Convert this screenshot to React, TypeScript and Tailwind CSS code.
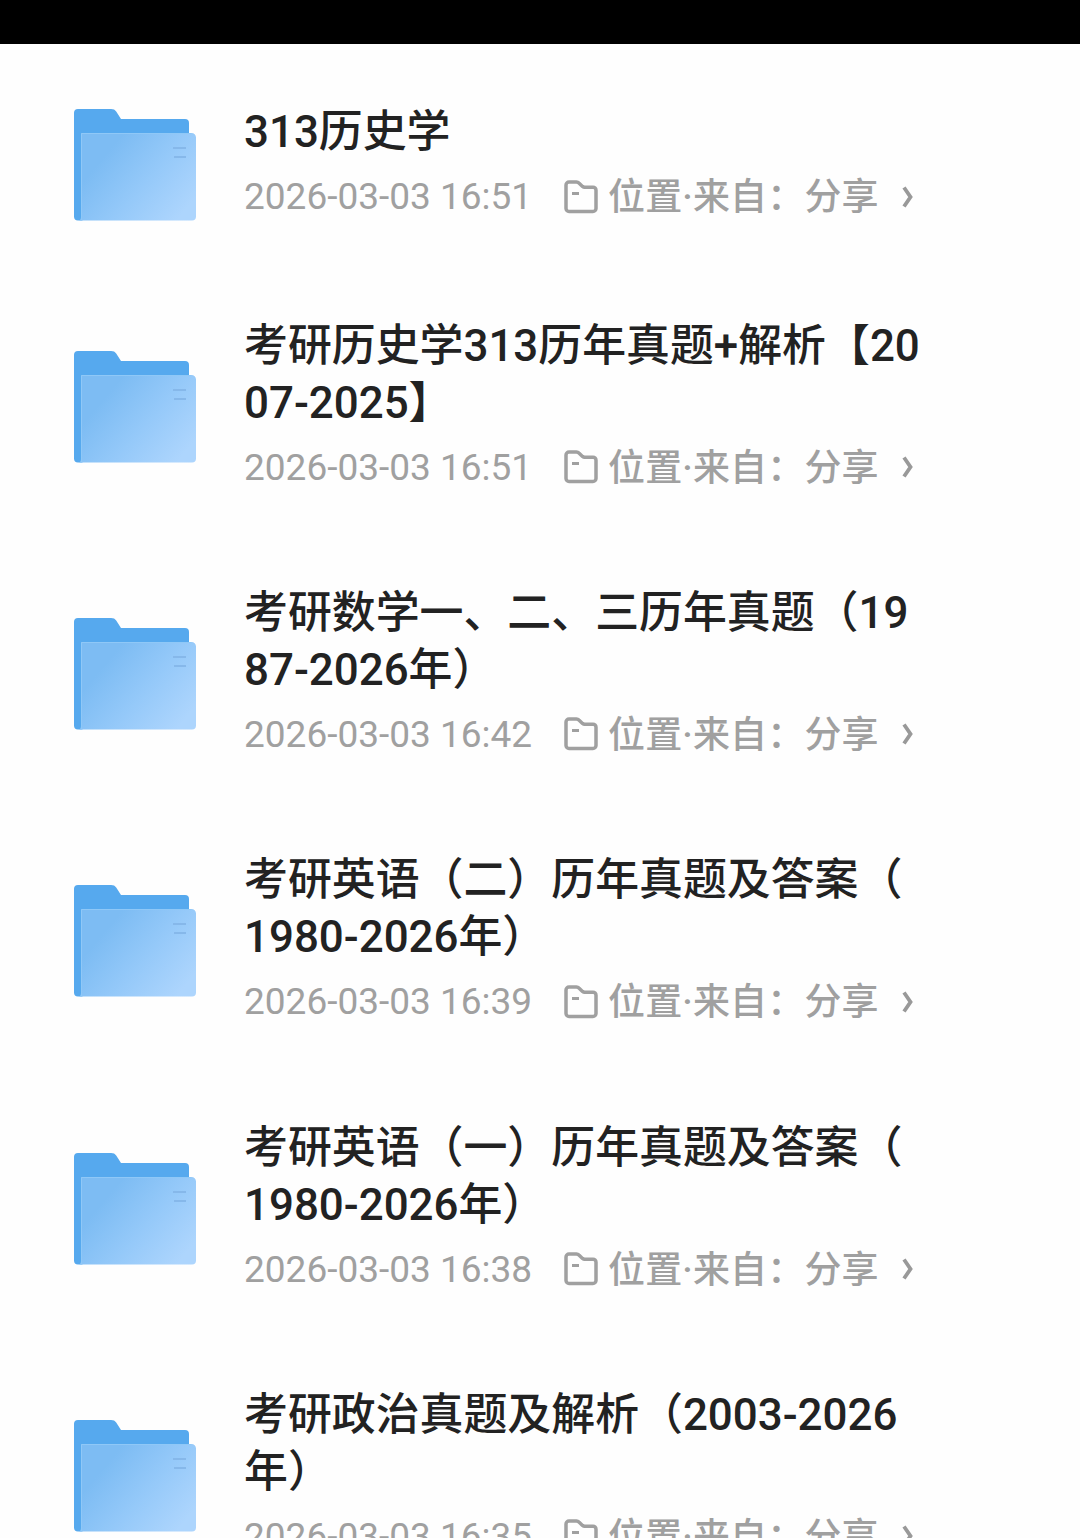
type FolderItem = {
  title: string[];
  time: string;
};

const folders: FolderItem[] = [
  { title: ["313历史学"], time: "2026-03-03 16:51" },
  { title: ["考研历史学313历年真题+解析【20", "07-2025】"], time: "2026-03-03 16:51" },
  { title: ["考研数学一、二、三历年真题（19", "87-2026年）"], time: "2026-03-03 16:42" },
  { title: ["考研英语（二）历年真题及答案（", "1980-2026年）"], time: "2026-03-03 16:39" },
  { title: ["考研英语（一）历年真题及答案（", "1980-2026年）"], time: "2026-03-03 16:38" },
  { title: ["考研政治真题及解析（2003-2026", "年）"], time: "2026-03-03 16:35" },
];

function FolderIcon({ id }: { id: string }) {
  return (
    <svg className="h-[114px] w-[124px] shrink-0" viewBox="0 0 124 114" fill="none">
      <defs>
        <linearGradient id={`${id}-front`} x1="30" y1="50" x2="104" y2="112" gradientUnits="userSpaceOnUse">
          <stop offset="0" stopColor="#7dbcf3" />
          <stop offset="0.5" stopColor="#95c9f9" />
          <stop offset="1" stopColor="#add5fd" />
        </linearGradient>
      </defs>
      <path
        d="M1 5a4 4 0 0 1 4-4h33c2.500 0 4 .8 5.200 2.600L48 11h64a4 4 0 0 1 4 4v40L9 112.500H5a4 4 0 0 1-4-4V5Z"
        fill="#56a9ee"
      />
      <path d="M8 25h110.500a4.500 4.500 0 0 1 4.500 4.500V108.500a4 4 0 0 1-4 4H6c1.500-.5 2-2 2-4V25Z" fill={`url(#${id}-front)`} />
      <path d="M8.500 112V25.500H118" stroke="#8fc8f7" strokeWidth="1" />
      <path d="M100 40h13M101 49h12" stroke="#86b8ea" strokeWidth="2" />
    </svg>
  );
}

function LocationIcon() {
  return (
    <svg className="ml-[35px] h-[34px] w-[34px] shrink-0" viewBox="0 0 34 34" fill="none" stroke="#a0a0a0">
      <path
        d="M2 5a3 3 0 0 1 3-3h7.500c1 0 1.700.3 2.400 1l3.600 3.400c.7.6 1.300.8 2.200.8H29a3 3 0 0 1 3 3V28.500a3 3 0 0 1-3 3H5a3 3 0 0 1-3-3V5Z"
        strokeWidth="3.500"
        strokeLinejoin="round"
      />
      <path d="M8 13.500h7" strokeWidth="3" />
    </svg>
  );
}

function FolderRow({ item, index }: { item: FolderItem; index: number }) {
  return (
    <li
      className={`flex shrink-0 items-center pl-[73px] ${item.title.length === 1 ? "h-[217px]" : "h-[267.3px]"}`}
    >
      <FolderIcon id={`folder-${index}`} />
      <div className="ml-[47px] whitespace-nowrap">
        <h2 className="pt-px text-[43.9px] leading-[57px] font-medium text-[#222]">
          {item.title.map((line) => (
            <span key={line} className="block">
              {line}
            </span>
          ))}
        </h2>
        <div className="flex h-[65px] items-center pt-[6px] text-[37px] leading-[59px] text-[#a0a0a0]">
          <span className="w-[285px]">{item.time}</span>
          <LocationIcon />
          <span className="ml-[10px] pt-[2px] font-medium tracking-[0.15px]">位置·来自：分享</span>
          <svg className="ml-[23px] h-6 w-3 shrink-0" viewBox="0 0 12 24" fill="none">
            <path d="M2 2.500 8.500 12 2 21.500" stroke="#999" strokeWidth="3.800" />
          </svg>
        </div>
      </div>
    </li>
  );
}

export default function App() {
  return (
    <main className="h-[1538px] w-[1080px] overflow-hidden bg-[#fefefe] font-[Roboto,'Noto_Sans_CJK_SC',sans-serif]" lang="zh-CN">
      <div className="h-11 bg-black" />
      <ul className="flex flex-col pt-3">
        {folders.map((item, i) => (
          <FolderRow key={i} item={item} index={i} />
        ))}
      </ul>
    </main>
  );
}
